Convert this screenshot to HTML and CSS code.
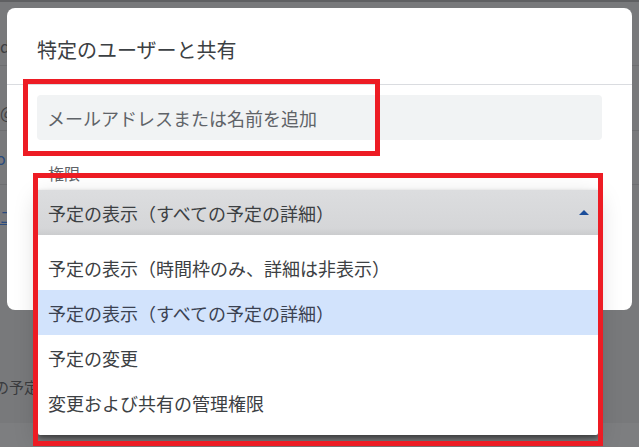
FILE: index.html
```html
<!DOCTYPE html>
<html lang="ja">
<head>
<meta charset="utf-8">
<title>特定のユーザーと共有</title>
<link rel="stylesheet" href="styles.css">
</head>
<body>
<div class="page">
  <div class="page-top"></div>
  <div class="page-row row-1"><span class="bg-text">d</span></div>
  <div class="page-row row-2"><span class="bg-text">@</span></div>
  <div class="page-row row-3"><span class="bg-text link shift">o</span></div>
  <div class="page-row row-4"><span class="bg-text link ul">エ</span></div>
  <div class="page-row row-5"><span class="bg-text later">の予定</span></div>
  <div class="page-row row-6"></div>
</div>

<div class="dialog">
  <div class="dlg-head">
    <h2 class="dlg-title">特定のユーザーと共有</h2>
  </div>
  <div class="dlg-body">
    <div class="field">メールアドレスまたは名前を追加</div>
    <div class="perm-label">権限</div>
    <div class="select">予定の表示（すべての予定の詳細）</div>
  </div>

  <div class="menu">
    <div class="menu-current">
      <span>予定の表示（すべての予定の詳細）</span>
      <span class="caret"></span>
    </div>
    <ul class="menu-list">
      <li class="menu-item">予定の表示（時間枠のみ、詳細は非表示）</li>
      <li class="menu-item is-active">予定の表示（すべての予定の詳細）</li>
      <li class="menu-item">予定の変更</li>
      <li class="menu-item">変更および共有の管理権限</li>
    </ul>
  </div>
</div>

<div class="mark mark-1"></div>
<div class="mark mark-2"></div>
</body>
</html>
```

FILE: styles.css
```css
* { box-sizing: border-box; }

html, body {
  margin: 0;
  padding: 0;
}

body {
  width: 639px;
  height: 447px;
  overflow: hidden;
  position: relative;
  background: #78797b;
  font-family: "Noto Sans CJK JP", "Noto Sans", sans-serif;
  color: #3c4043;
}

/* dimmed page behind the dialog */
.page {
  display: flex;
  flex-direction: column;
}
.page-top {
  height: 2px;
  background: #5f6062;
}
.page-row {
  display: flex;
  align-items: center;
  border-bottom: 1px solid #6d6e70;
  font-size: 16px;
  line-height: 20px;
  color: #3e3f42;
  white-space: nowrap;
}
.row-1 { height: 64px; align-items: flex-end; padding-bottom: 9px; }
.row-2 { height: 65px; align-items: flex-end; padding-bottom: 8px; }
.row-3 { height: 54px; }
.row-4 { height: 166px; align-items: flex-start; padding-top: 21px; border-bottom-color: transparent; }
.row-5 { height: 72px; border-bottom: none; }
.row-6 { height: 24px; background: #7d7e80; border-bottom: none; }

.bg-text { flex-shrink: 0; }
.link { color: #2a4b7e; }
.ul { text-decoration: underline; }
.shift { margin-left: -4px; }

.later {
  font-size: 15px;
  margin-left: -6px;
  color: #3a3b3e;
}

/* dialog */
.dialog {
  position: absolute;
  left: 7px;
  top: 8px;
  width: 625px;
  height: 302px;
  background: #ffffff;
  border-radius: 8px;
}

.dlg-head {
  height: 77px;
  padding: 8px 0 0 30px;
  display: flex;
  align-items: center;
  border-bottom: 1px solid #dadce0;
}
.dlg-title {
  margin: 0;
  font-size: 20px;
  line-height: 24px;
  font-weight: 400;
  color: #3c4043;
}

.dlg-body {
  padding: 10px 30px 0 30px;
  display: flex;
  flex-direction: column;
}

.field {
  height: 45px;
  background: #f1f3f4;
  border-radius: 4px;
  padding-left: 10px;
  display: flex;
  align-items: center;
  font-size: 18px;
  color: #5f6368;
}

.perm-label {
  margin-top: 23px;
  padding-left: 11px;
  font-size: 16px;
  line-height: 20px;
  color: #5f6368;
}

.select {
  margin-top: 7px;
  margin-left: 1px;
  width: 560px;
  height: 45px;
  padding-left: 10px;
  display: flex;
  align-items: center;
  font-size: 18px;
  background: #f1f3f4;
}

/* open dropdown */
.menu {
  position: absolute;
  left: 31px;
  top: 182px;
  width: 560px;
  background: #ffffff;
  box-shadow: 0 3px 5px rgba(0, 0, 0, 0.45), 0 8px 24px rgba(0, 0, 0, 0.18);
  border-radius: 0 0 2px 2px;
}

.menu-current {
  height: 45px;
  padding: 0 9px 0 10px;
  display: flex;
  align-items: center;
  justify-content: space-between;
  font-size: 18px;
  color: #3c4043;
  background: linear-gradient(#dcdddf, #d5d6d8 85%, #cbccce);
}

.caret {
  width: 0;
  height: 0;
  border-left: 5px solid transparent;
  border-right: 5px solid transparent;
  border-bottom: 5px solid #1a4d9a;
}

.menu-list {
  list-style: none;
  margin: 0;
  padding: 10px 0;
}

.menu-item {
  height: 45px;
  padding-left: 10px;
  display: flex;
  align-items: center;
  font-size: 18px;
  color: #3c4043;
}
.menu-item.is-active {
  background: #d2e3fc;
  color: #3b4252;
}

/* red annotation boxes */
.mark {
  position: absolute;
  border: 5px solid #ed1c24;
}
.mark-1 {
  left: 23px;
  top: 79px;
  width: 357px;
  height: 77px;
}
.mark-2 {
  left: 33px;
  top: 173px;
  width: 570px;
  height: 273px;
}
```
